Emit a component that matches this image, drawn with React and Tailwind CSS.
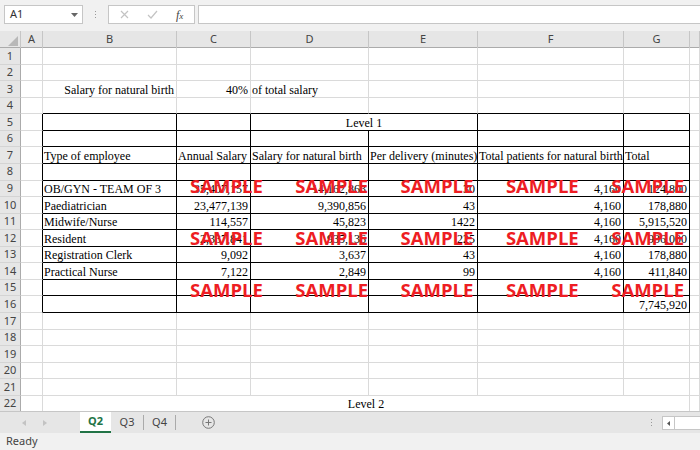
import clsx from 'clsx';

const UI = { fontFamily: '"Noto Sans", "Open Sans", sans-serif' };
const SERIF = { fontFamily: '"Liberation Serif", "Times New Roman", serif' };

const COLS = ['A', 'B', 'C', 'D', 'E', 'F', 'G', 'H'];

// r -> { colIndex: { t, a, span } }   colIndex 0 = A
const cells = {
  3: { 1: { t: 'Salary for natural birth', a: 'r' }, 2: { t: '40%', a: 'r' }, 3: { t: 'of total salary', a: 'l' } },
  5: { 3: { t: 'Level 1', a: 'c', span: 2 } },
  7: {
    1: { t: 'Type of employee' },
    2: { t: 'Annual Salary' },
    3: { t: 'Salary for natural birth' },
    4: { t: 'Per delivery (minutes)' },
    5: { t: 'Total patients for natural birth' },
    6: { t: 'Total' },
  },
  9: { 1: { t: 'OB/GYN - TEAM OF 3' }, 2: { t: '35,407,157', a: 'r' }, 3: { t: '14,162,863', a: 'r' }, 4: { t: '30', a: 'r' }, 5: { t: '4,160', a: 'r' }, 6: { t: '124,800', a: 'r' } },
  10: { 1: { t: 'Paediatrician' }, 2: { t: '23,477,139', a: 'r' }, 3: { t: '9,390,856', a: 'r' }, 4: { t: '43', a: 'r' }, 5: { t: '4,160', a: 'r' }, 6: { t: '178,880', a: 'r' } },
  11: { 1: { t: 'Midwife/Nurse' }, 2: { t: '114,557', a: 'r' }, 3: { t: '45,823', a: 'r' }, 4: { t: '1422', a: 'r' }, 5: { t: '4,160', a: 'r' }, 6: { t: '5,915,520', a: 'r' } },
  12: { 1: { t: 'Resident' }, 2: { t: '2,337,841', a: 'r' }, 3: { t: '935,136', a: 'r' }, 4: { t: '225', a: 'r' }, 5: { t: '4,160', a: 'r' }, 6: { t: '936,000', a: 'r' } },
  13: { 1: { t: 'Registration Clerk' }, 2: { t: '9,092', a: 'r' }, 3: { t: '3,637', a: 'r' }, 4: { t: '43', a: 'r' }, 5: { t: '4,160', a: 'r' }, 6: { t: '178,880', a: 'r' } },
  14: { 1: { t: 'Practical Nurse' }, 2: { t: '7,122', a: 'r' }, 3: { t: '2,849', a: 'r' }, 4: { t: '99', a: 'r' }, 5: { t: '4,160', a: 'r' }, 6: { t: '411,840', a: 'r' } },
  16: { 6: { t: '7,745,920', a: 'r' } },
  22: { 1: { t: 'Level 2', a: 'c', span: 6 } },
};

// table B5:G16 has thin black borders
const rightBlack = (r, c) => r >= 5 && r <= 16 && c >= 0 && c <= 6;
const bottomBlack = (r, c) => r >= 4 && r <= 16 && c >= 1 && c <= 6;

const Row = ({ r }) => {
  const row = cells[r] || {};
  const out = [
    <div
      key="h"
      className="flex items-center justify-center border-r border-b border-r-[#ababab] border-b-[#d4d4d4] bg-[#e6e6e6] text-[11px] text-[#444]"
    >
      {r}
    </div>,
  ];
  for (let c = 0; c < COLS.length; c++) {
    const cell = row[c];
    const span = cell?.span || 1;
    const last = c + span - 1;
    const align = cell?.a || 'l';
    out.push(
      <div
        key={c}
        className={clsx(
          'flex items-end overflow-hidden whitespace-nowrap border-r border-b px-[1px] text-[12px] leading-[14px] text-black',
          rightBlack(r, last) ? 'border-r-black' : 'border-r-[#dadada]',
          bottomBlack(r, c) ? 'border-b-black' : 'border-b-[#dadada]',
          align === 'r' && 'justify-end pr-[2px]',
          align === 'c' && 'justify-center',
          span === 2 && 'col-span-2',
          span === 6 && 'col-span-6'
        )}
        style={SERIF}
      >
        {cell?.t}
      </div>
    );
    c = last;
  }
  return out;
};

const Sample = ({ top, left }) => (
  <span
    className="absolute text-[18.5px] font-bold leading-none text-[#ee1d23]"
    style={{ top, left, fontFamily: '"Open Sans", "Noto Sans", sans-serif' }}
  >
    SAMPLE
  </span>
);

const FormulaBar = () => (
  <div className="flex h-[31px] items-start bg-[#f1f1f1] pt-[5px]">
    <div className="ml-[4px] flex h-[19px] w-[79px] items-center justify-between border border-[#c6c6c6] bg-white pl-[5px] pr-[4px] text-[11px] text-[#333]">
      <span>A1</span>
      <svg width="7" height="4" viewBox="0 0 7 4"><path d="M0 0h7L3.5 4z" fill="#666" /></svg>
    </div>
    <div className="flex h-[19px] w-[25px] flex-col items-center justify-center gap-[2px]">
      <span className="h-[1px] w-[1px] bg-[#999]" />
      <span className="h-[1px] w-[1px] bg-[#999]" />
      <span className="h-[1px] w-[1px] bg-[#999]" />
    </div>
    <div className="flex h-[19px] w-[87px] items-center border border-[#c6c6c6] bg-white">
      <svg className="ml-[11px]" width="9" height="9" viewBox="0 0 9 9">
        <path d="M1 1l7 7M8 1L1 8" stroke="#c3c3c3" strokeWidth="1.2" />
      </svg>
      <svg className="ml-[18px]" width="11" height="9" viewBox="0 0 11 9">
        <path d="M1 5l3 3 6-7" stroke="#c3c3c3" strokeWidth="1.2" fill="none" />
      </svg>
      <span className="ml-[18px] text-[12px] italic text-[#444]" style={SERIF}>
        f<span className="text-[9px]">x</span>
      </span>
    </div>
    <div className="ml-[3px] h-[19px] flex-1 border border-r-0 border-[#c6c6c6] bg-white" />
  </div>
);

const ColumnHeaders = () => (
  <div className="grid h-[17px] grid-cols-[21px_22px_134px_74px_118px_109px_146px_66px_1fr] border-b border-[#ababab] bg-[#e6e6e6] text-[11px] text-[#444]">
    <div className="relative border-r border-[#c6c6c6]">
      <svg className="absolute bottom-[2px] right-[2px]" width="10" height="10" viewBox="0 0 10 10">
        <path d="M10 0v10H0z" fill="#b8b8b8" />
      </svg>
    </div>
    {COLS.map((c) => (
      <div key={c} className="flex items-center justify-center border-r border-[#c6c6c6]">
        {c === 'H' ? '' : c}
      </div>
    ))}
  </div>
);

const TabBar = () => (
  <div className="flex h-[22px] items-stretch border-t border-[#c6c6c6] bg-[#e6e6e6] text-[11px]">
    <div className="flex w-[80px] items-center pl-[22px] gap-[17px]">
      <svg width="4" height="6" viewBox="0 0 4 6"><path d="M4 0v6L0 3z" fill="#c3c3c3" /></svg>
      <svg width="4" height="6" viewBox="0 0 4 6"><path d="M0 0v6l4-3z" fill="#c3c3c3" /></svg>
    </div>
    <div className="flex w-[31px] items-center justify-center border-b-2 border-[#217346] bg-white font-bold text-[#217346]">Q2</div>
    <div className="my-[3px] flex w-[33px] items-center justify-center border-r border-[#aaa] text-[#444]">Q3</div>
    <div className="my-[3px] flex w-[32px] items-center justify-center border-r border-[#aaa] text-[#444]">Q4</div>
    <div className="flex w-[65px] items-center justify-center">
      <svg width="13" height="13" viewBox="0 0 13 13">
        <circle cx="6.5" cy="6.5" r="5.8" stroke="#777" fill="none" />
        <path d="M6.5 3.5v6M3.5 6.5h6" stroke="#777" />
      </svg>
    </div>
    <div className="flex-1" />
    <div className="flex w-[14px] flex-col items-center justify-center gap-[2px]">
      <span className="h-[1px] w-[1px] bg-[#999]" />
      <span className="h-[1px] w-[1px] bg-[#999]" />
      <span className="h-[1px] w-[1px] bg-[#999]" />
    </div>
    <div className="ml-[4px] mt-[4px] flex h-[14px] w-[38px] items-center border border-r-0 border-[#c6c6c6] bg-white">
      <div className="flex h-full w-[12px] items-center justify-center border-r border-[#c6c6c6]">
        <svg width="3" height="5" viewBox="0 0 3 5"><path d="M3 0v5L0 2.5z" fill="#555" /></svg>
      </div>
    </div>
  </div>
);

export default function App() {
  const rows = Array.from({ length: 22 }, (_, i) => i + 1);
  return (
    <div className="flex h-[450px] w-[700px] flex-col overflow-hidden bg-white" style={UI}>
      <FormulaBar />
      <ColumnHeaders />
      <div className="relative h-[363px] overflow-hidden">
        <div className="grid grid-cols-[21px_22px_134px_74px_118px_109px_146px_66px_1fr] auto-rows-[16.57px]">
          {rows.map((r) => (
            <Row key={r} r={r} />
          ))}
        </div>
        {[128.5, 180.5, 232.5].map((top) =>
          [0, 1, 2, 3, 4].map((i) => <Sample key={`${top}-${i}`} top={top} left={190 + i * 105.3} />)
        )}
      </div>
      <TabBar />
      <div className="flex h-[17px] items-center bg-[#f1f1f1] pl-[6px] text-[11px] text-[#444]">Ready</div>
    </div>
  );
}
